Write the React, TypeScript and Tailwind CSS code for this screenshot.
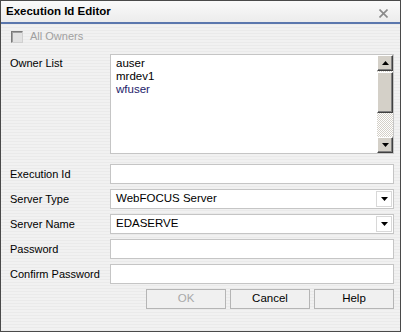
import { useState } from "react";

const font = "font-['Liberation_Sans','Arial',sans-serif]";

const ScrollArrow = ({ up }: { up?: boolean }) => (
  <div className="flex h-[16px] w-[16px] items-center justify-center border border-t-white border-l-white border-r-[#404040] border-b-[#404040] bg-[#d4d0c8] shadow-[inset_-1px_-1px_0_#808080]">
    <svg width="7" height="4" viewBox="0 0 7 4">
      {up ? <path d="M0 4 L3.5 0 L7 4 Z" fill="#000" /> : <path d="M0 0 L3.5 4 L7 0 Z" fill="#000" />}
    </svg>
  </div>
);

const TextBox = ({ value }: { value?: string }) => (
  <div className="flex h-[20px] items-center border border-[#c5c5c5] bg-white px-[5px] text-[11.5px] text-black">
    {value}
  </div>
);

const SelectBox = ({ value }: { value: string }) => (
  <div className="flex h-[20px] items-center border border-[#c5c5c5] bg-white text-[11.5px] text-black">
    <span className="flex-1 px-[5px]">{value}</span>
    <div className="mr-px flex h-[16px] w-[16px] items-center justify-center border border-[#d8d8d8] bg-white">
      <svg width="7" height="4" viewBox="0 0 7 4">
        <path d="M0 0 L3.5 4 L7 0 Z" fill="#000" />
      </svg>
    </div>
  </div>
);

const Btn = ({ label, disabled }: { label: string; disabled?: boolean }) => (
  <button
    className={
      "flex h-[20px] w-[80px] items-center justify-center border border-[#b5b5b5] bg-[#f0f0f0] text-[11.5px] " +
      (disabled ? "text-[#a8a8a8]" : "text-black")
    }
  >
    {label}
  </button>
);

export default function App() {
  const [owners] = useState(["auser", "mrdev1", "wfuser"]);

  return (
    <div className={`${font} h-[332px] w-[401px] overflow-hidden border border-[#4a4a4a] bg-[repeating-linear-gradient(180deg,#f1f1f1_0px,#f1f1f1_2px,#eaeaea_2px,#eaeaea_3px)]`}>
      {/* Title bar */}
      <div className="flex h-[21px] items-center justify-between bg-gradient-to-b from-[#fafafa] to-[#ececec] pl-[5px] pr-[12px]">
        <span className="text-[11.5px] font-bold text-black">Execution Id Editor</span>
        <svg width="9" height="9" viewBox="0 0 9 9" className="mt-[3px]">
          <path d="M0.5 0.5 L8.5 8.5 M8.5 0.5 L0.5 8.5" stroke="#8a8a8a" strokeWidth="1.6" />
        </svg>
      </div>
      <div className="h-[2px] bg-[#5b77ad]" />

      <div className="flex flex-col pl-[9px] pr-[6px] pt-[6px]">
        {/* All owners checkbox */}
        <div className="flex h-[13px] items-center gap-[7px] pl-px">
          <div className="h-[12px] w-[12px] border border-t-[#7a7a7a] border-l-[#7a7a7a] border-r-[#d0d0d0] border-b-[#d0d0d0] bg-[#e2e2e2] shadow-[inset_1px_1px_0_#a0a0a0]" />
          <span className="text-[11px] text-[#a0a0a0]">All Owners</span>
        </div>

        {/* Owner list */}
        <div className="mt-[11px] flex">
          <span className="w-[100px] pt-[1px] text-[11px] text-black">Owner List</span>
          <div className="flex h-[100px] flex-1 border border-[#c5c5c5] bg-white">
            <div className="flex flex-1 flex-col px-[5px] pt-[2px] text-[11.5px] leading-[13px]">
              {owners.map((o, i) => (
                <span key={o} className={i === 2 ? "text-[#22226a]" : "text-black"}>
                  {o}
                </span>
              ))}
            </div>
            <div className="flex w-[16px] flex-col bg-[repeating-conic-gradient(#ffffff_0_25%,#d4d0c8_0_50%)] bg-[length:2px_2px]">
              <ScrollArrow up />
              <div className="mt-px h-[41px] w-[16px] border border-t-white border-l-white border-r-[#404040] border-b-[#404040] bg-[#d4d0c8] shadow-[inset_-1px_-1px_0_#808080]" />
              <div className="flex-1" />
              <ScrollArrow />
            </div>
          </div>
        </div>

        {/* Fields */}
        <div className="mt-[10px] grid grid-cols-[100px_1fr] items-center gap-y-[5px] text-[11px] text-black">
          <span>Execution Id</span>
          <TextBox />
          <span>Server Type</span>
          <SelectBox value="WebFOCUS Server" />
          <span>Server Name</span>
          <SelectBox value="EDASERVE" />
          <span>Password</span>
          <TextBox />
          <span>Confirm Password</span>
          <TextBox />
        </div>

        {/* Buttons */}
        <div className="mt-[5px] flex justify-end gap-[4px]">
          <Btn label="OK" disabled />
          <Btn label="Cancel" />
          <Btn label="Help" />
        </div>
      </div>
    </div>
  );
}
